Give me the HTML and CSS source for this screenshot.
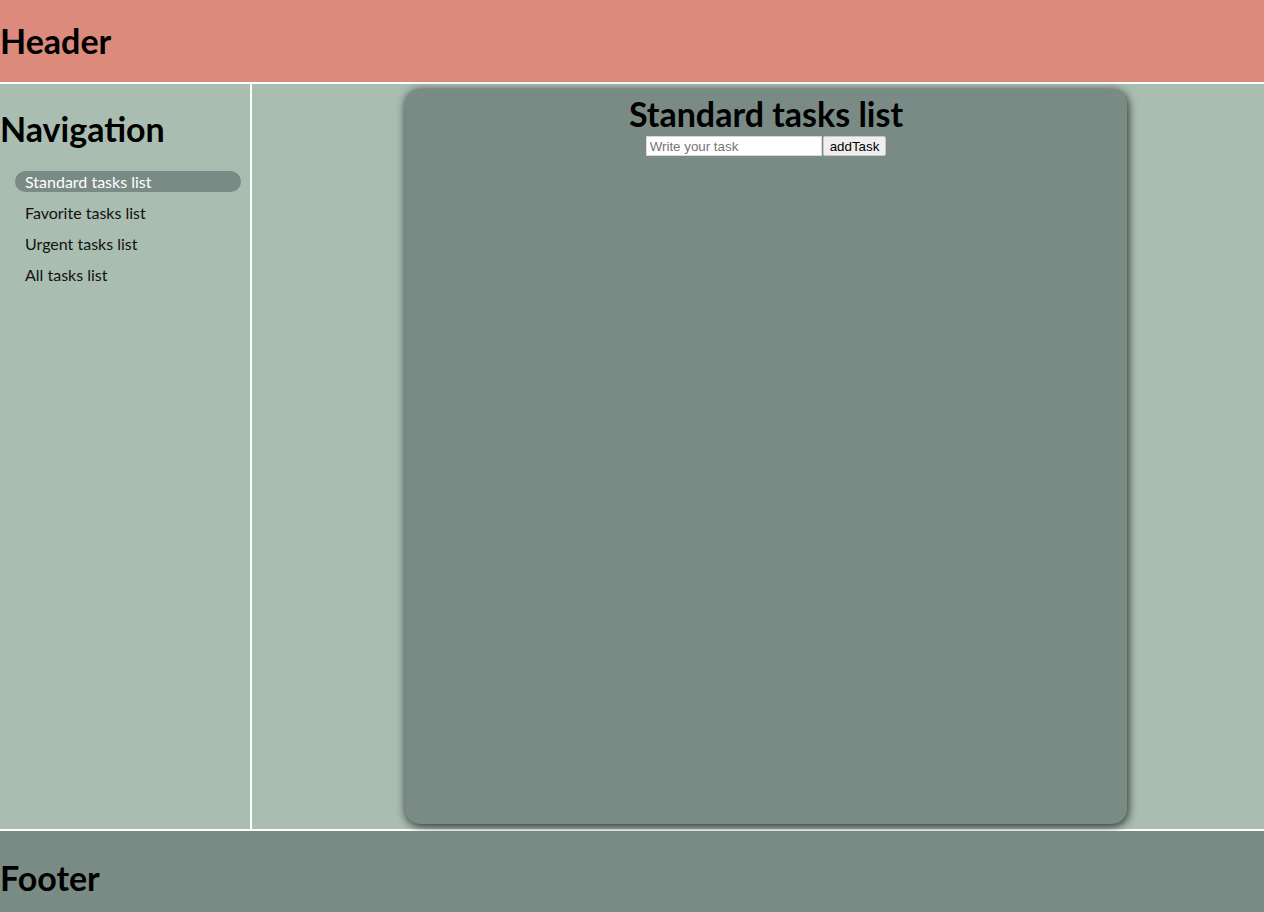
FILE: index.html
```html
<!DOCTYPE html>
<html lang="en">
<head>
<meta charset="utf-8">
<title>Tasks</title>
<link rel="stylesheet" href="styles.css">
</head>
<body>
<div class="layout">
  <header class="header"><h1 class="title-big">Header</h1></header>
  <nav class="nav">
    <h2 class="title-big nav-title">Navigation</h2>
    <ul class="nav-list">
      <li class="nav-item active">Standard tasks list</li>
      <li class="nav-item">Favorite tasks list</li>
      <li class="nav-item">Urgent tasks list</li>
      <li class="nav-item">All tasks list</li>
    </ul>
  </nav>
  <main class="main">
    <section class="card">
      <h2 class="card-title">Standard tasks list</h2>
      <form class="add-form">
        <input class="task-input" type="text" placeholder="Write your task">
        <button class="add-btn" type="button">addTask</button>
      </form>
    </section>
  </main>
  <footer class="footer"><h1 class="title-big">Footer</h1></footer>
</div>
</body>
</html>
```
FILE: styles.css
```css
html, body {
  margin: 0;
  padding: 0;
  height: 100%;
}
body {
  font-family: Lato, "Open Sans", sans-serif;
}
.layout {
  display: grid;
  grid-template-columns: 250px 1fr;
  grid-template-rows: 82px 1fr 81px;
  gap: 2px;
  background: #ffffff;
  height: 912px;
}
.header {
  grid-column: 1 / 3;
  background: #db8a7b;
  display: flex;
  align-items: center;
}
.title-big {
  margin: 0;
  font-size: 34px;
  font-weight: 700;
  line-height: 40px;
  color: #000;
}
.nav {
  background: #a9bdb1;
  padding-top: 25px;
}
.nav-title {
  margin-bottom: 22px;
}
.nav-list {
  list-style: none;
  margin: 0;
  padding: 0 9px 0 15px;
  display: flex;
  flex-direction: column;
  gap: 10px;
}
.nav-item {
  height: 21px;
  line-height: 21px;
  padding-left: 10px;
  font-size: 16px;
  color: #111;
  border-radius: 11px;
}
.nav-item.active {
  background: #7a8b85;
  color: #fff;
}
.main {
  background: #a9bdb1;
  padding: 5px 137px 5px 153px;
  display: flex;
}
.card {
  flex: 1;
  background: #7a8b85;
  border-radius: 15px;
  box-shadow: 1px 2px 10px rgba(0, 0, 0, 0.8);
  display: flex;
  flex-direction: column;
  align-items: center;
  padding-top: 5px;
}
.card-title {
  margin: 0;
  font-size: 34px;
  font-weight: 700;
  line-height: 40px;
}
.add-form {
  display: flex;
  margin-top: 2px;
}
.task-input {
  width: 176px;
  height: 20px;
  box-sizing: border-box;
  border: 1px solid #d8d8d8;
  padding: 1px 3px;
  font-family: "Liberation Sans", Arial, sans-serif;
  font-size: 13.33px;
  background: #fff;
  margin: 0;
}
.task-input::placeholder {
  color: #757575;
}
.add-btn {
  margin: 0 0 0 1px;
  height: 20px;
  box-sizing: border-box;
  padding: 1px 6px;
  font-family: "Liberation Sans", Arial, sans-serif;
  font-size: 13.33px;
  background: #efefef;
  border: 1px solid #c8c8c8;
  border-radius: 2px;
  color: #000;
}
.footer {
  grid-column: 1 / 3;
  background: #7a8b85;
  display: flex;
  align-items: center;
  padding-top: 12px;
}
```
